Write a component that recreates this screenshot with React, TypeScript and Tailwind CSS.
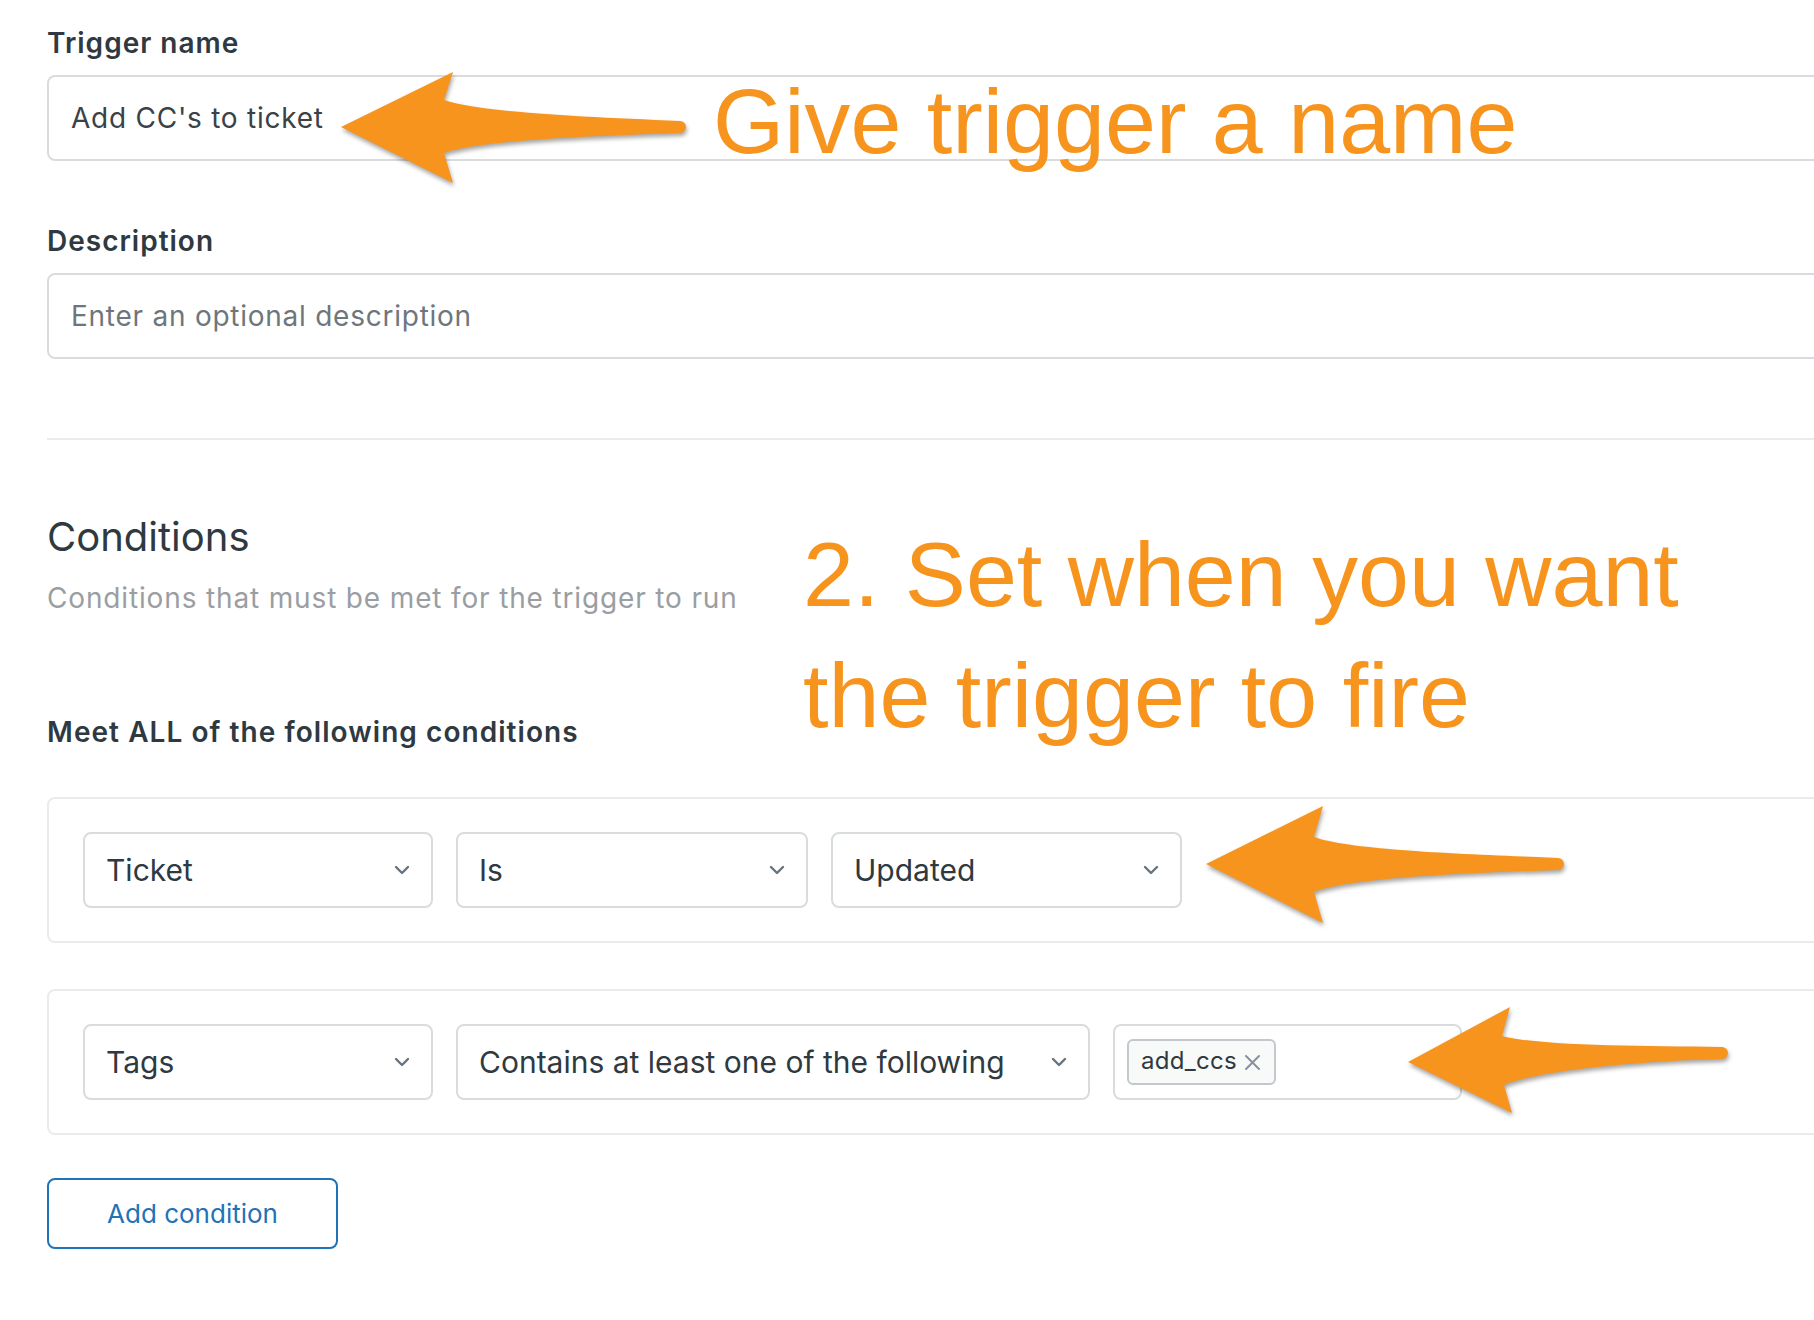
import React from "react";

const ui: React.CSSProperties = { fontFamily: 'Inter, "Noto Sans", sans-serif' };
const anno: React.CSSProperties = { fontFamily: '"Liberation Sans", Arial, sans-serif' };

function Chevron() {
  return (
    <svg width="16" height="10" viewBox="0 0 16 10" fill="none">
      <path d="M2 2 L8 8 L14 2" stroke="#68737d" strokeWidth="2.4" strokeLinecap="round" strokeLinejoin="round" />
    </svg>
  );
}

function Select({ className, label }: { className: string; label: string }) {
  return (
    <div
      className={
        "flex items-center justify-between h-[76px] border-2 border-[#d8dcde] rounded-[8px] pl-[21px] pr-[21px] text-[30px] text-[#2f3941] bg-white " +
        className
      }
    >
      <span className="whitespace-nowrap">{label}</span>
      <Chevron />
    </div>
  );
}

function Arrows() {
  return (
    <svg
      className="absolute left-0 top-0 pointer-events-none"
      width="1814"
      height="1320"
      viewBox="0 0 1814 1320"
      style={{ filter: "drop-shadow(1px 3px 2px rgba(0,0,0,0.35))" }}
    >
      <path
        fill="#f7941d"
        d="M341,127 L453,72 L444,100 C478,112 580,117 680,121 A6,6 0 0 1 680,133 C580,136 478,141 444,153 L453,183 Z"
      />
      <path
        fill="#f7941d"
        d="M1206,864 L1323,806 L1314,837 C1350,850 1460,854 1558,858 A6,6 0 0 1 1558,870 C1460,873 1350,878 1314,892 L1323,923 Z"
      />
      <path
        fill="#f7941d"
        d="M1408,1062 L1510,1007 L1502,1036 C1540,1046 1640,1046 1722,1047 A6,6 0 0 1 1722,1059 C1640,1061 1540,1070 1504,1085 L1512,1113 Z"
      />
    </svg>
  );
}

export default function App() {
  return (
    <div className="relative w-[1814px] h-[1320px] overflow-hidden bg-white" style={ui}>
      <div className="flex flex-col pl-[47px] pt-[23px] w-[1900px]">
        <div className="text-[28px] leading-[40px] font-semibold tracking-[1px] text-[#2f3941]">Trigger name</div>
        <div className="mt-[12px] h-[86px] border-2 border-[#d8dcde] rounded-[8px] flex items-center pl-[22px] text-[28px] tracking-[0.75px] text-[#3a4248]">
          Add CC's to ticket
        </div>

        <div className="mt-[60px] text-[28px] leading-[40px] font-semibold tracking-[1px] text-[#2f3941]">Description</div>
        <div className="mt-[12px] h-[86px] border-2 border-[#d8dcde] rounded-[8px] flex items-center pl-[22px] text-[28px] tracking-[0.75px] text-[#6f767b]">
          Enter an optional description
        </div>

        <div className="mt-[79px] h-[2px] bg-[#e9ebed]" />

        <div className="mt-[73px] text-[40px] leading-[48px] text-[#2f3941]">Conditions</div>
        <div className="mt-[17px] text-[28px] leading-[40px] tracking-[0.85px] text-[#9a9ea2]">
          Conditions that must be met for the trigger to run
        </div>

        <div className="mt-[94px] text-[28px] leading-[40px] font-semibold tracking-[1.05px] text-[#2f3941]">
          Meet ALL of the following conditions
        </div>

        <div className="mt-[45px] border-2 border-[#e9ebed] rounded-[8px] pl-[34px] py-[33px] flex gap-[23px]">
          <Select className="w-[350px]" label="Ticket" />
          <Select className="w-[352px]" label="Is" />
          <Select className="w-[351px]" label="Updated" />
        </div>

        <div className="mt-[46px] border-2 border-[#e9ebed] rounded-[8px] pl-[34px] py-[33px] flex gap-[23px]">
          <Select className="w-[350px]" label="Tags" />
          <Select className="w-[634px]" label="Contains at least one of the following" />
          <div className="w-[349px] h-[76px] border-2 border-[#d8dcde] rounded-[8px] flex items-center pl-[12px]">
            <div className="h-[46px] flex items-center gap-[7px] pl-[12px] pr-[13px] border-2 border-[#c2c8cc] bg-[#f8f9f9] rounded-[6px] text-[24px] tracking-[0.3px] text-[#2f3941]">
              <span className="-mt-[2px]">add_ccs</span>
              <svg width="17" height="17" viewBox="0 0 17 17">
                <path d="M2 2 L15 15 M15 2 L2 15" stroke="#87929d" strokeWidth="2" strokeLinecap="round" />
              </svg>
            </div>
          </div>
        </div>

        <div className="mt-[43px] w-[291px] h-[71px] border-2 border-[#1f73b7] rounded-[8px] flex items-center justify-center text-[26px] text-[#1f73b7]">
          Add condition
        </div>
      </div>

      <Arrows />

      <div
        className="absolute left-[713px] top-[75px] text-[91.6px] leading-[92px] text-[#f7941d] whitespace-nowrap"
        style={anno}
      >
        Give trigger a name
      </div>
      <div
        className="absolute left-[803px] top-[514px] text-[91.6px] leading-[121px] text-[#f7941d] whitespace-nowrap"
        style={anno}
      >
        <div>2. Set when you want</div>
        <div>the trigger to fire</div>
      </div>
    </div>
  );
}
